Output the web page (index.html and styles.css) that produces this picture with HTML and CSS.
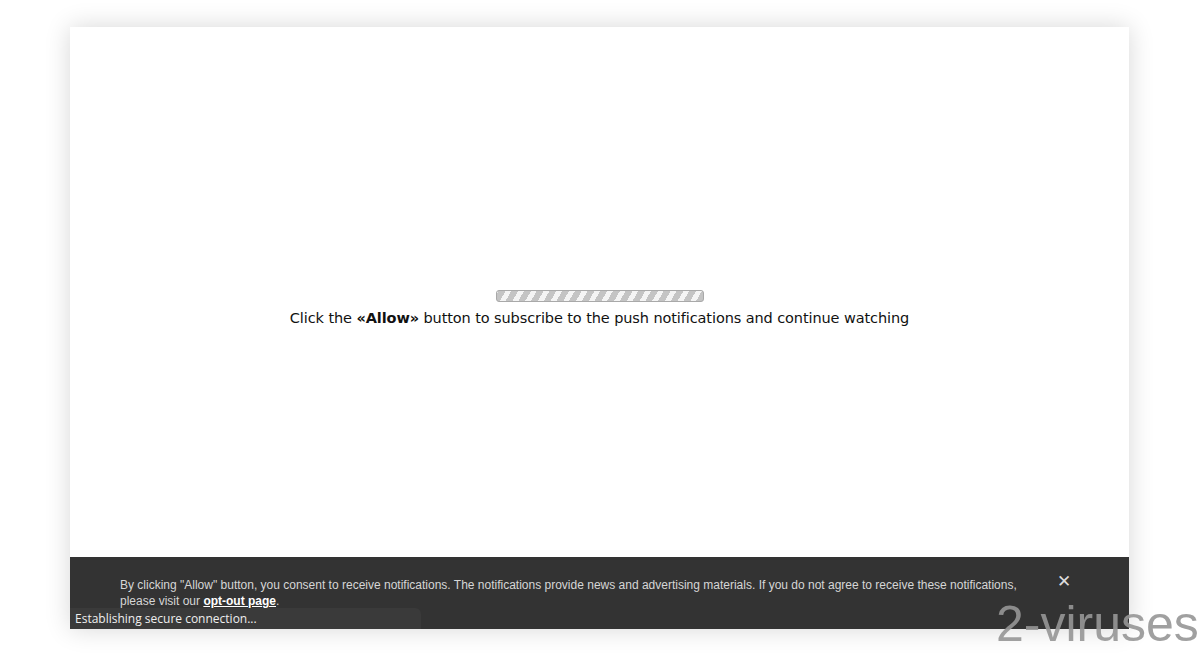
FILE: index.html
```html
<!DOCTYPE html>
<html lang="en">
<head>
    <meta charset="UTF-8">
    <meta name="viewport" content="width=device-width, initial-scale=1.0">
    <title>Push notifications</title>
    <link rel="stylesheet" href="styles.css">
</head>
<body>
    <div class="window">
        <div class="content">
            <div class="progress"></div>
            <p class="message">Click the <b>&laquo;Allow&raquo;</b> button to subscribe to the push notifications and continue watching</p>
        </div>
        <div class="consent">
            <p class="consent-text">By clicking "Allow" button, you consent to receive notifications. The notifications provide news and advertising materials. If you do not agree to receive these notifications, please visit our <a href="#" class="optout">opt-out page</a>.</p>
            <span class="close">&#x2715;</span>
        </div>
        <div class="status">Establishing secure connection...</div>
    </div>
    <div class="watermark">2-viruses</div>
</body>
</html>
```

FILE: styles.css
```css
html, body {
    height: 100%;
}

body {
    margin: 0;
    background-color: #ffffff;
    overflow: hidden;
    position: relative;
}

.window {
    position: relative;
    margin: 27px 71px 0 70px;
    height: 602px;
    display: flex;
    flex-direction: column;
    background-color: #ffffff;
    box-shadow: 0 0 24px rgba(0, 0, 0, 0.16);
}

.content {
    flex: 1;
    display: flex;
    flex-direction: column;
    align-items: center;
    padding-top: 263px;
}

.progress {
    width: 206px;
    height: 10px;
    border: 1px solid #a9a9a9;
    border-radius: 3px;
    background-color: #c8c8c8;
    background-image: repeating-linear-gradient(
        -60deg,
        #c4c4c4 0px,
        #c4c4c4 6px,
        #f4f4f4 6px,
        #f4f4f4 11px
    );
}

.message {
    margin: 8px 0 0;
    font-family: "DejaVu Sans", sans-serif;
    font-size: 14.5px;
    color: #111111;
    letter-spacing: -0.1px;
}

.consent {
    height: 72px;
    background-color: #333333;
    display: flex;
    align-items: flex-start;
    padding: 0 0 0 50px;
    box-sizing: border-box;
}

.consent-text {
    margin: 20px 0 0;
    width: 900px;
    font-family: "Liberation Sans", Arial, sans-serif;
    font-size: 12px;
    line-height: 16px;
    color: #d6d6d6;
}

.optout {
    color: #ffffff;
    font-weight: bold;
    text-decoration: underline;
    white-space: nowrap;
}

.close {
    margin: 14px 0 0 37px;
    font-family: "DejaVu Sans", sans-serif;
    font-size: 17px;
    font-weight: bold;
    color: #dcdcdc;
}

.status {
    position: absolute;
    left: 0;
    bottom: 0;
    width: 351px;
    height: 21px;
    box-sizing: border-box;
    padding: 2px 0 0 5px;
    background-color: #3a3a3a;
    border-top-right-radius: 6px;
    font-family: "Open Sans", sans-serif;
    font-size: 12px;
    color: #eeeeee;
}

.watermark {
    position: absolute;
    left: 996px;
    top: 595px;
    font-family: "Liberation Sans", Arial, sans-serif;
    font-size: 50px;
    color: rgba(150, 150, 150, 0.9);
}
```
